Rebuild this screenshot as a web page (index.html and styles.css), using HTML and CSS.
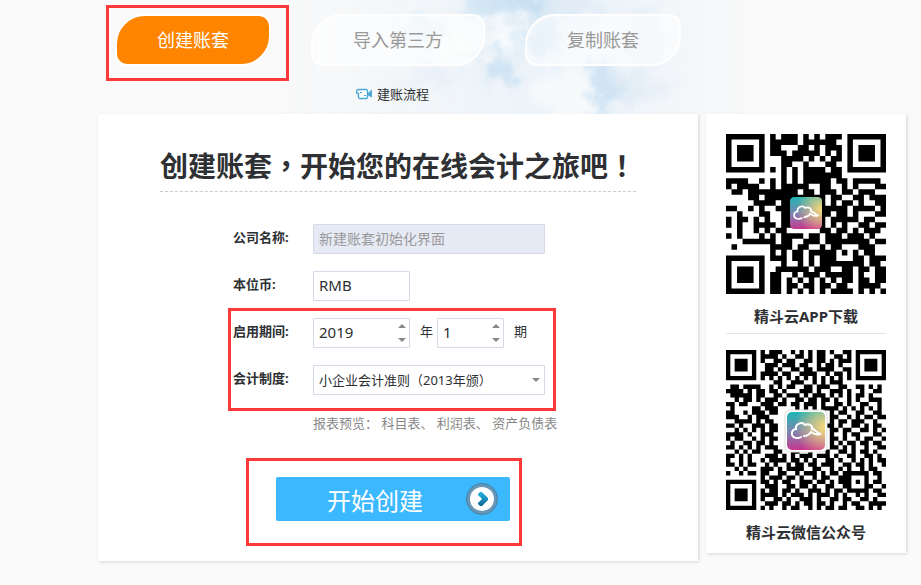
FILE: index.html
```html
<!DOCTYPE html>
<html lang="zh-CN">
<head>
    <meta charset="UTF-8">
    <meta name="viewport" content="width=device-width, initial-scale=1.0">
    <title>创建账套</title>
    <link rel="stylesheet" href="styles.css">
</head>
<body>
    <div class="page">
        <header class="header">
            <svg class="sky" viewBox="0 0 480 114" preserveAspectRatio="none" aria-hidden="true">
                <defs>
                    <filter id="ragged" x="-20%" y="-20%" width="140%" height="140%" color-interpolation-filters="sRGB">
                        <feGaussianBlur stdDeviation="6" result="soft"/>
                        <feTurbulence type="fractalNoise" baseFrequency="0.04" numOctaves="5" seed="4"/>
                        <feDisplacementMap in="soft" scale="40" xChannelSelector="R" yChannelSelector="G"/>
                    </filter>
                    <linearGradient id="fade">
                        <stop offset="0" stop-color="#fff" stop-opacity="0"/>
                        <stop offset="0.4" stop-color="#fff" stop-opacity="0.7"/>
                        <stop offset="0.55" stop-color="#fff"/>
                        <stop offset="0.75" stop-color="#fff" stop-opacity="0.8"/>
                        <stop offset="1" stop-color="#fff" stop-opacity="0"/>
                    </linearGradient>
                    <mask id="edges"><rect width="480" height="114" fill="url(#fade)"/></mask>
                </defs>
                <g mask="url(#edges)">
                    <rect width="480" height="114" fill="#ecf3f9"/>
                    <g filter="url(#ragged)">
                        <g fill="#c6dff2">
                            <ellipse cx="238" cy="2" rx="52" ry="14"/>
                            <ellipse cx="272" cy="38" rx="24" ry="20"/>
                            <ellipse cx="226" cy="66" rx="20" ry="16"/>
                            <ellipse cx="334" cy="88" rx="16" ry="24"/>
                            <ellipse cx="150" cy="30" rx="30" ry="8"/>
                        </g>
                        <g fill="#dde9f5">
                            <ellipse cx="378" cy="40" rx="22" ry="22"/>
                            <ellipse cx="370" cy="86" rx="30" ry="18"/>
                            <ellipse cx="300" cy="8" rx="40" ry="10"/>
                            <ellipse cx="160" cy="80" rx="34" ry="10"/>
                        </g>
                        <g fill="#f6f9fb">
                            <ellipse cx="236" cy="36" rx="20" ry="12"/>
                            <ellipse cx="294" cy="94" rx="28" ry="24"/>
                            <ellipse cx="190" cy="50" rx="26" ry="12"/>
                        </g>
                    </g>
                </g>
            </svg>
            <nav class="tabs">
                <div class="marked">
                    <button type="button" class="tab active">创建账套</button>
                    <span class="mark mark-tab"></span>
                </div>
                <button type="button" class="tab">导入第三方</button>
                <button type="button" class="tab">复制账套</button>
            </nav>
            <a href="#" class="guide">
                <svg width="16" height="12" viewBox="0 0 16 12" aria-hidden="true">
                    <path d="M2.5 1.5h8l1 1v7l-1 1h-7l-1-1V5.500L.7 5V2.500z" fill="#fff" stroke="#4aa9d6" stroke-width="1.4"/>
                    <path d="M12 5l4-3.5v8L12 7.5z" fill="#4aa9d6"/>
                    <path d="M4 4.5h2M8 7.5h2" stroke="#4aa9d6"/>
                </svg>
                建账流程
            </a>
        </header>

        <div class="content">
            <main class="panel">
                <h1>创建账套<span lang="zh-TW">，</span>开始您的在线会计之旅吧<span lang="zh-TW">！</span></h1>
                <form class="form">
                    <div class="row">
                        <label for="company">公司名称:</label>
                        <input id="company" class="field wide" type="text" value="新建账套初始化界面" disabled>
                    </div>
                    <div class="row">
                        <label for="currency">本位币:</label>
                        <input id="currency" class="field year" type="text" value="RMB">
                    </div>
                    <div class="marked rows">
                        <div class="row">
                            <label for="year">启用期间:</label>
                            <div class="spinner year">
                                <input id="year" class="field" type="number" value="2019">
                                <div class="arrows">
                                    <button type="button" class="up" aria-label="增加年份"></button>
                                    <button type="button" class="down" aria-label="减少年份"></button>
                                </div>
                            </div>
                            <label class="unit" for="year">年</label>
                            <div class="spinner period">
                                <input id="period" class="field" type="number" value="1">
                                <div class="arrows">
                                    <button type="button" class="up" aria-label="增加期数"></button>
                                    <button type="button" class="down" aria-label="减少期数"></button>
                                </div>
                            </div>
                            <label class="unit" for="period">期</label>
                        </div>
                        <div class="row">
                            <label for="system">会计制度:</label>
                            <div class="select wide">
                                <select id="system" class="field">
                                    <option>小企业会计准则（2013年颁）</option>
                                </select>
                            </div>
                        </div>
                        <span class="mark mark-rows"></span>
                    </div>
                    <p class="preview">报表预览： <a href="#">科目表</a>、 <a href="#">利润表</a>、 <a href="#">资产负债表</a></p>
                    <div class="marked submit">
                        <button type="button" class="start">
                            <span>开始创建</span>
                            <svg width="32" height="32" viewBox="0 0 32 32" aria-hidden="true">
                                <defs>
                                    <linearGradient id="arrow" x1="0" y1="0" x2="0" y2="1">
                                        <stop offset="0" stop-color="#27b3e6"/>
                                        <stop offset="1" stop-color="#0c6796"/>
                                    </linearGradient>
                                </defs>
                                <circle cx="16" cy="16" r="15.5" fill="#6797b8" stroke="#467f9f"/>
                                <circle cx="16" cy="16" r="12" fill="#fff"/>
                                <path d="M12 11l2-2h2l6 6v2l-6 6h-2l-2-2v-1l4-4-4-4z" fill="url(#arrow)"/>
                            </svg>
                        </button>
                        <span class="mark mark-submit"></span>
                    </div>
                </form>
            </main>

            <aside class="codes">
                <figure>
                    <svg class="qr" id="qr-app" viewBox="0 0 160 160" role="img" aria-label="精斗云APP下载二维码">
                        <defs>
                            <radialGradient id="yellow" cx="1" cy="0.4" r="0.8">
                                <stop offset="0" stop-color="#f8dc78"/>
                                <stop offset="1" stop-color="#f8dc78" stop-opacity="0"/>
                            </radialGradient>
                            <linearGradient id="base" x1="0.3" y1="0" x2="0.4" y2="1">
                                <stop offset="0" stop-color="#20b6b4"/>
                                <stop offset="0.5" stop-color="#7e83b0"/>
                                <stop offset="1" stop-color="#c9358f"/>
                            </linearGradient>
                            <symbol id="logo" viewBox="0 0 38 38">
                                <rect width="38" height="38" rx="5" fill="url(#base)"/>
                                <rect width="38" height="38" rx="5" fill="url(#yellow)"/>
                                <path d="M14 25c-3 2-8 1-9-2-1-4 2-6 4-6-1-5 6-8 9-4 4-2 8 1 7 4 3 0 4 3 8 5-4 2-7-1-9-2-2 3-4 4-7 4" fill="none" stroke="#fff" stroke-width="2" stroke-linecap="round"/>
                            </symbol>
                        </defs>
                        <path class="cells"/>
                        <use href="#logo" x="64" y="63" width="32" height="32"/>
                    </svg>
                    <figcaption>精斗云APP下载</figcaption>
                </figure>
                <figure>
                    <svg class="qr" id="qr-wechat" viewBox="0 0 160 160" role="img" aria-label="精斗云微信公众号二维码">
                        <path class="cells"/>
                        <rect x="59" y="60" width="42" height="42" rx="5" fill="#fff" stroke="#ddd"/>
                        <use href="#logo" x="61" y="62" width="38" height="38"/>
                    </svg>
                    <figcaption>精斗云微信公众号</figcaption>
                </figure>
            </aside>
        </div>
    </div>
    <script src="qr.js"></script>
</body>
</html>
```
FILE: styles.css
```css
* {
    box-sizing: border-box;
}

body {
    margin: 0;
    background-color: #fafafa;
    color: #2e3033;
    font-family: "Noto Sans", "Noto Sans CJK SC", sans-serif;
    font-size: 13px;
    line-height: 20px;
}

button,
input,
select {
    font-family: inherit;
    color: inherit;
}

a {
    color: inherit;
    text-decoration: none;
}

.page {
    padding: 0 15px 24px 98px;
}

/* Header */
.header {
    position: relative;
    height: 114px;
    padding-top: 14px;
}

.sky {
    position: absolute;
    top: 0;
    left: 172px;
    width: 480px;
    height: 114px;
}

.tabs {
    position: relative;
    display: flex;
    gap: 40px;
    padding-left: 17px;
}

.tab {
    display: block;
    height: 52px;
    padding: 0 40px;
    border: 2px solid #fff;
    border-radius: 30px 12px 30px 12px;
    background: rgba(255, 255, 255, 0.6);
    color: #999;
    font-size: 18px;
    line-height: 48px;
    cursor: pointer;
}

.tab.active {
    background: #ff8400;
    color: #fff;
}

.guide {
    position: relative;
    display: flex;
    align-items: center;
    gap: 5px;
    width: max-content;
    margin: 18px 0 0 258px;
}

/* Red frames drawn over the steps to follow */
.marked {
    position: relative;
}

.mark {
    position: absolute;
    border: 3px solid #fc3a3a;
    pointer-events: none;
}

.mark-tab {
    inset: -9px -18px -15px -9px;
}

.mark-rows {
    inset: -10px 7px -16px -5px;
}

.mark-submit {
    inset: -19px -12px -25px -30px;
}

/* Panels */
.content {
    display: grid;
    grid-template-columns: 1fr 200px;
    align-items: start;
    gap: 8px;
}

.panel,
.codes {
    background: #fff;
    box-shadow: 1px 1px 3px rgba(0, 0, 0, 0.15);
}

.panel {
    padding: 32px 20px 40px;
}

h1 {
    width: max-content;
    margin: 0 auto 32px;
    padding-bottom: 5px;
    border-bottom: 1px dashed #ccc;
    font-size: 28px;
    line-height: 40px;
}

.form {
    width: 330px;
    margin: 0 auto;
}

.row {
    display: flex;
    align-items: center;
    height: 30px;
    margin-bottom: 17px;
}

.row label {
    width: 80px;
    padding-bottom: 5px;
    font-weight: bold;
}

.row .unit {
    width: auto;
    padding-left: 10px;
    padding-right: 4px;
    font-weight: normal;
}

.field {
    width: 100%;
    height: 30px;
    padding: 0 5px 2px;
    border: 1px solid #d6d9e6;
    border-radius: 1px;
    background: #fff;
    font-size: 15px;
    outline: none;
}

.wide {
    width: 232px;
}

.year {
    width: 97px;
}

.period {
    width: 67px;
}

.field:disabled {
    background: #e6eaf5;
    color: #999;
    font-size: 14px;
}

.spinner,
.select {
    position: relative;
}

.spinner .field {
    appearance: textfield;
}

.spinner .field::-webkit-inner-spin-button {
    display: none;
}

.arrows {
    position: absolute;
    top: 1px;
    right: 1px;
    display: flex;
    flex-direction: column;
    width: 14px;
    height: 28px;
}

.arrows button {
    display: flex;
    flex: 1;
    align-items: center;
    justify-content: center;
    padding: 0;
    border: 0;
    background: none;
}

.arrows button::before,
.select::after {
    content: "";
    border: 4px solid transparent;
}

.arrows .up::before {
    border-top: 0;
    border-bottom-color: #888;
}

.arrows .down::before,
.select::after {
    border-bottom: 0;
    border-top-color: #888;
}

.select::after {
    position: absolute;
    top: 13px;
    right: 5px;
}

.select .field {
    appearance: none;
    padding-bottom: 0;
    font-size: 13px;
}

.preview {
    margin: 0 0 44px 80px;
    padding-top: 1px;
    color: #888;
    white-space: nowrap;
}

.submit {
    width: 234px;
    margin-left: 43px;
}

.start {
    display: flex;
    align-items: center;
    justify-content: space-between;
    width: 100%;
    height: 44px;
    padding: 0 12px 0 51px;
    border: 0;
    border-radius: 2px;
    background: #3cb8ff;
    color: #fff;
    font-size: 24px;
    cursor: pointer;
}

/* QR codes */
.codes {
    padding: 20px 20px 4px;
}

figure {
    margin: 0;
}

figure + figure {
    margin-top: 16px;
}

.qr {
    display: block;
    width: 100%;
}

figcaption {
    padding: 11px 0 6px;
    font-size: 15px;
    font-weight: bold;
    line-height: 22px;
    text-align: center;
}

figure:first-child figcaption {
    border-bottom: 1px solid #e4e4e4;
}
```
FILE: qr.js
```js
// One string per row, # is a dark cell
const appCode = [
    '#######.#.###.#.#.###.#######',
    '#.....#.#####.######..#.....#',
    '#.###.#.##...##.#.###.#.###.#',
    '#.###.#.###.#####.#.#.#.###.#',
    '#.###.#...####.#.#.##.#.###.#',
    '#.....#...##..#...##..#.....#',
    '#######.#.#.#.####.##.#######',
    '..........#.#.#######........',
    '####..#.#.#.#.#####.##.#####.',
    '#.####..#.#####..##..#.#...##',
    '.##.#########.##.###.##.###..',
    '....##.###########.##..##.###',
    '.....####.##.....#.#.##.#..##',
    '##..#.#..###.....#####.####.#',
    '..#...##..##.....##.##.#...##',
    '#.##.#.#..##.....#.#####.##..',
    '#.#..####.##.....#.#.#..##.##',
    '..#..#.#.##......##.##.#.###.',
    '#.#...#.#.####.##.###.###.#..',
    '...######.##..###.########.##',
    '.#......####.##..#.##...###..',
    '........#.#.##.#####.#.#.##..',
    '#######.###.##.#.###...##.###',
    '#.....#...#..#.#.########.##.',
    '#.###.#..######.###..##.##.##',
    '#.###.#.##..#.###.#####.#..##',
    '#.###.#.##.#.#.#.#.#.##.##.##',
    '#.....#.##.##.##.##.##..####.',
    '#######.##.#.#.#.#.####.#.#.#'
];

const wechatCode = [
    '#######.#.###..#.#.#.##.#..##.#######',
    '#.....#.####.#..##.#.##..##.#.#.....#',
    '#.###.#.#..##.##..##.##.#.###.#.###.#',
    '#.###.#..###.###.##..#.##.#...#.###.#',
    '#.###.#..##.#..##.##.####..##.#.###.#',
    '#.....#.####.##..####..#.##.#.#.....#',
    '#######.#.#.#.#.#.#.#.#.#.#.#.#######',
    '...........##..###..#.#.###..........',
    '.##.####..#.#.##..##.###..##..##.#.#.',
    '####.#.##.##.#...###.#..###.#..#..##.',
    '.#####.##..##.###.#.###.#.#.#.##.#...',
    '..#.##.#.###.#..##.##.##.#..#.#..###.',
    '##.##...###.##.##.###.#..##.#..##..#.',
    '.#....##.###....#.#.#.####.#.#.#.#.#.',
    '##..#.###.##............#.##..##..##.',
    '###..#.###..............##..#.#.##.##',
    '..####.#.##.............#.##.###..#..',
    '##.#..###.##...........##.#..##.#.##.',
    '..#.#.#.#.##............##.##..##.#.#',
    '####.#..###.............#..#.##...##.',
    '#.##..#.#.##............##.#..#.##..#',
    '.#..##.##.#.............#.#.##.##.##.',
    '##.#.#.#.###............##.#.#..#..##',
    '..#.#.##...##..##..#...#..##.#.##.#..',
    '##.#.#...###.#.#.###.###.#..##..##.#.',
    '#..#.#..#.####.##.#.#..##.#..#.#.#.##',
    '##.#.##..#.#..#.##.##.###..##.##.#..#',
    '..#.#...###.#.####..##..#.#.#..#.##..',
    '#..#.##.##..##..#.###.#.##.######.##.',
    '........#.###.##.#..#.##..###...#..#.',
    '#######.##.#.##..###.##.#.###.#.#.##.',
    '#.....#..###..##.##.#..##..##...##..#',
    '#.###.#.#.##.##.#..###.#.##.#####.##.',
    '#.###.#.####.#.###.#.###.#.#..#.#..##',
    '#.###.#.#..##.#..###.#..##.##..##.#..',
    '#.....#..###.##.#.##.##.#..#.##..####',
    '#######.#.#..#.##..#.#.##.##..##.#.#.'
];

function drawCode(id, rows) {
    const size = 160 / rows.length;
    let d = '';
    rows.forEach((row, y) => {
        for (const run of row.matchAll(/#+/g)) {
            d += `M${run.index * size} ${y * size}h${run[0].length * size}v${size}h${-run[0].length * size}z`;
        }
    });
    document.querySelector(`#${id} .cells`).setAttribute('d', d);
}

drawCode('qr-app', appCode);
drawCode('qr-wechat', wechatCode);
```
